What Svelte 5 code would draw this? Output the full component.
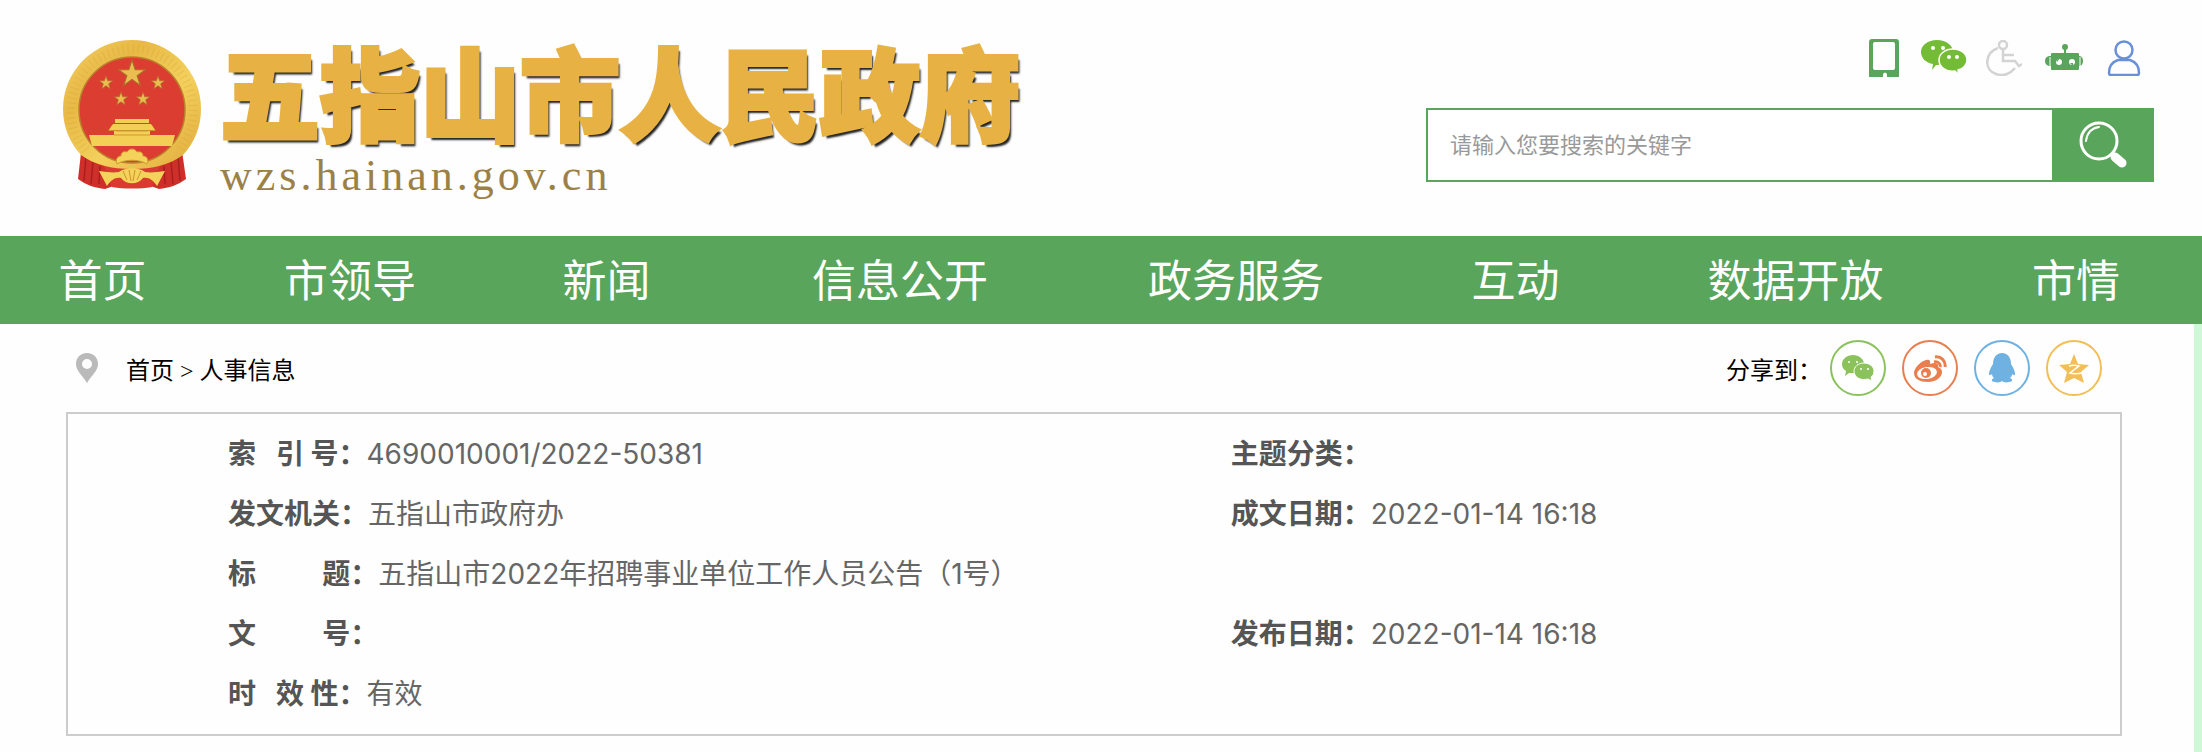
<script lang="ts">
	const navItems = ['首页', '市领导', '新闻', '信息公开', '政务服务', '互动', '数据开放', '市情'];

	// \u00a0 把短标签撑开，与四字标签对齐
	const wide = '\u00a0'.repeat(10);
	const rows = [
		[
			{ label: '索\u00a0\u00a0\u00a0引\u00a0号：', value: '4690010001/2022-50381' },
			{ label: '主题分类：', value: '' },
		],
		[
			{ label: '发文机关：', value: '五指山市政府办' },
			{ label: '成文日期：', value: '2022-01-14 16:18' },
		],
		[{ label: `标${wide}题：`, value: '五指山市2022年招聘事业单位工作人员公告（1号）' }],
		[
			{ label: `文${wide}号：`, value: '' },
			{ label: '发布日期：', value: '2022-01-14 16:18' },
		],
		[{ label: '时\u00a0\u00a0\u00a0效\u00a0性：', value: '有效' }],
	];

	let keyword = $state('');
</script>

{#snippet star(x: number, y: number, r: number)}
	<path
		transform="translate({x} {y}) scale({r})"
		d="M0-1 .23-.31H.95L.37.12.59.81 0 .38-.59.81-.37.12-.95-.31H-.23Z"
		fill="#e9bd4f"
		stroke="#a8702a"
		stroke-width=".08"
	/>
{/snippet}

<div class="page">
	<header class="header">
		<a class="brand" href="/" aria-label="五指山市人民政府">
			<svg class="emblem" viewBox="0 0 140 150" aria-hidden="true">
				<defs>
					<linearGradient id="gold" x1="0" y1="0" x2="1" y2="1">
						<stop offset="0" stop-color="#f1cd62" />
						<stop offset=".3" stop-color="#e8b945" />
						<stop offset=".6" stop-color="#f3d05c" />
						<stop offset="1" stop-color="#dfa93a" />
					</linearGradient>
				</defs>
				<!-- 绶带 -->
				<path fill="#cf2f29" d="M20 104 16 139c8 6 17 9 27 10l14-5h26l14 5c10-1 19-4 27-10l-5-35z" />
				<path fill="none" stroke="#a91f20" stroke-width="1.500" d="M24 116l-2 25M31 122l-2 22M38 126l-1 18M116 116l2 25M109 122l2 22M102 126l1 18" />
				<path fill="#db3a30" d="M42 126h56l-8 21c-12 2-28 2-40 0z" />
				<!-- 麦穗圆环 -->
				<path fill="url(#gold)" d="M19 115A69 69 0 0 1 1 69a69 69 0 0 1 138 0 69 69 0 0 1-18 46c-14 10-30 14-51 14s-37-4-51-14z" />
				<path fill="none" stroke="#cf9b36" stroke-width="9" stroke-dasharray="1 4" opacity=".3" d="M24 110A61 61 0 1 1 116 110" />
				<circle cx="70" cy="70" r="53" fill="#db3d31" stroke="#b9812c" stroke-width="1.500" />
				{@render star(70, 34, 14)}
				{@render star(44, 43, 7)}
				{@render star(96, 43, 7)}
				{@render star(59, 59, 7)}
				{@render star(81, 59, 7)}
				<!-- 天安门 -->
				<path fill="#c98e31" d="M50 85h40l4 6H46z" />
				<path fill="#f4cf55" d="M53 79h34v4H53zM51 84h38l4 6H47zM52 91h36v5H52zM27 95h86l-3 11H30z" />
				<path stroke="#cf9636" stroke-width="1" d="M54 91h32M52 95h36" />
				<!-- 齿轮与结 -->
				<path fill="#f5d25a" stroke="#d19a37" d="M55 124c-2-5 1-8 4-8 0-4 3-5 6-4 2-4 8-4 10 0 4-1 6 1 6 4 4 0 6 4 4 8-8-5-22-5-30 0z" />
				<path fill="#f5d25a" d="M37 131c8 1 14 2 20 1 6-5 20-5 26 0 6 1 12 0 20-1l-8 15c-4-6-8-9-14-8-5 7-17 7-22 0-6-1-10 2-14 8z" />
				<path fill="none" stroke="#ce9331" d="M61 131l4 9M67 130l2 11M73 130l-2 11M79 131l-4 9" />
			</svg>
			<span class="brand-text">
				<span class="site-name">五指山市人民政府</span>
				<span class="site-url">wzs.hainan.gov.cn</span>
			</span>
		</a>

		<div class="tools">
			<div class="quick-links">
				<a href="#mobile" aria-label="手机版">
					<svg width="30" height="38" viewBox="0 0 30 38">
						<path fill="#5aa55c" fill-rule="evenodd" d="M3 0h24q3 0 3 3v35H18v-3q-2-3-4 0v3H0V3q0-3 3-3zM6 3q-2 0-2 2v24q0 2 2 2h18q2 0 2-2V5q0-2-2-2z" />
					</svg>
				</a>
				<a href="#wechat" aria-label="微信">
					<svg width="46" height="36" viewBox="0 0 46 36">
						<path fill="#74bb36" d="M16 0c9 0 16 5 16 12S25 25 16 25h-1l-4 5 1-6C5 23 0 18 0 12 0 5 7 0 16 0z" />
						<path fill="#74bb36" stroke="#fff" stroke-width="1.500" d="M32 9c8 0 14 5 14 11 0 5-4 9-9 10l1 5-4-4c-9 1-16-4-16-11 0-6 6-11 14-11z" />
						<g fill="#fff"><circle cx="12" cy="8" r="2" /><circle cx="22" cy="8" r="2" /><circle cx="28" cy="17" r="2" /><circle cx="36" cy="17" r="2" /></g>
					</svg>
				</a>
				<a href="#accessible" aria-label="无障碍">
					<svg width="36" height="36" viewBox="0 0 36 36" fill="none" stroke="#d3d3d3" stroke-width="2.500">
						<circle cx="17" cy="5" r="4" />
						<path d="M17 9v12h12l4 5 3-2M17 15h11M12 8C-2 13-2 30 10 34c8 3 15-1 19-6" />
					</svg>
				</a>
				<a href="#robot" aria-label="智能问答">
					<svg width="38" height="36" viewBox="0 0 38 36" fill="#5aa55c">
						<circle cx="20" cy="7" r="3" />
						<path d="M19 8h2v6h-2zM7 13h26q1 0 1 1v2h1q3 1 3 5t-3 5h-1v3q0 1-1 1H7q-1 0-1-1v-3H4Q0 25 0 21t4-5h2v-2q0-1 1-1z" />
						<g fill="#fff"><circle cx="14" cy="22" r="3" /><circle cx="27" cy="22" r="3" /></g>
						<path d="M11 20l4-2-3 4zM25 23l3 3v-3z" />
						<path stroke="#fff" d="M5 17v9M35 17v9" />
					</svg>
				</a>
				<a href="#user" aria-label="用户中心">
					<svg width="34" height="36" viewBox="0 0 34 36" fill="none" stroke="#6a90d8" stroke-width="2.500">
						<circle cx="17" cy="10" r="8.500" />
						<path d="M11 20h12c6 2 9 7 9 13q0 2-2 2H4q-2 0-2-2c0-6 3-11 9-13z" />
					</svg>
				</a>
			</div>
			<form class="search" onsubmit={(e) => e.preventDefault()}>
				<input type="text" bind:value={keyword} aria-label="搜索" placeholder="请输入您要搜索的关键字" />
				<button type="submit" aria-label="搜索">
					<svg width="50" height="48" viewBox="0 0 50 48" fill="none" stroke="#fff">
						<circle cx="21" cy="20" r="18" stroke-width="3" />
						<path stroke-width="2" stroke-linecap="round" d="M8 20C9 12 14 7 21 6" />
						<path stroke-width="9" stroke-linecap="round" d="M37 36l7 6" />
						<path stroke-width="4" d="M33 32l4 4" />
					</svg>
				</button>
			</form>
		</div>
	</header>

	<nav class="nav">
		{#each navItems as item}
			<a href="#{item}">{item}</a>
		{/each}
	</nav>

	<main class="content">
		<div class="location">
			<svg class="pin" width="22" height="30" viewBox="0 0 22 30" aria-hidden="true">
				<path fill="#bababa" fill-rule="evenodd" d="M11 0c7 0 11 5 11 11 0 7-7 12-11 19C7 23 0 18 0 11 0 5 4 0 11 0zm0 6a5 5 0 1 0 0 10 5 5 0 0 0 0-10z" />
			</svg>
			<div class="crumbs"><a href="#home">首页</a> &gt; <a href="#personnel">人事信息</a></div>
			<div class="share">
				<span>分享到：</span>
				<button class="wechat" aria-label="分享到微信">
					<svg width="32" height="26" viewBox="0 0 32 26">
						<path fill="currentColor" d="M11 0c6 0 11 4 11 9s-5 9-11 9l-4 0-4 3 1-5C1 14 0 12 0 9c0-5 5-9 11-9z" />
						<path fill="currentColor" stroke="#fff" d="M22 8c6 0 10 4 10 8 0 3-1 5-3 6l1 4-4-2c-8 2-14-2-14-8 0-4 4-8 10-8z" />
						<g fill="#fff"><circle cx="7" cy="7" r="1" /><circle cx="15" cy="7" r="1" /><circle cx="19" cy="14" r="1" /><circle cx="26" cy="14" r="1" /></g>
					</svg>
				</button>
				<button class="weibo" aria-label="分享到微博">
					<svg width="33" height="27" viewBox="0 0 33 27">
						<path fill="currentColor" d="M12 5c3-1 5 0 4 4 5-2 9-1 8 3 3 1 4 3 4 5 0 6-7 10-14 10C6 27 0 24 0 18 0 13 7 6 12 5z" />
						<ellipse cx="13" cy="18" rx="10" ry="6" fill="#fff" transform="rotate(-8 13 18)" />
						<circle cx="12" cy="18" r="5" fill="currentColor" />
						<circle cx="11" cy="19" r="2" fill="#fff" />
						<path fill="none" stroke="currentColor" stroke-width="3" d="M21 2c6-1 11 4 10 10M20 7c4-1 7 2 6 5" />
					</svg>
				</button>
				<button class="qq" aria-label="分享到QQ">
					<svg width="26" height="30" viewBox="0 0 26 30">
						<path fill="currentColor" d="M13 0c6 0 9 5 9 11 2 3 4 7 4 10 0 2-2 1-3 0 0 2-1 3-2 4 3 1 3 4-1 4-3 1-6 0-7-1-1 1-4 2-7 1-4 0-4-3-1-4-1-1-2-2-2-4-1 1-3 2-3 0 0-3 2-7 4-10C4 5 7 0 13 0z" />
					</svg>
				</button>
				<button class="qzone" aria-label="分享到QQ空间">
					<svg width="30" height="29" viewBox="0 0 30 29">
						<path fill="currentColor" d="M15 0l4 10 11 1-8 7 3 11-10-5-10 5 3-11-8-7 11-1z" />
						<path fill="none" stroke="#fff" stroke-width="1.500" d="M10 12c3-1 7-1 10 0l-9 7c4 1 7 1 12 0" />
					</svg>
				</button>
			</div>
		</div>

		<div class="info">
			<table>
				<tbody>
					{#each rows as row}
						<tr>
							{#each row as cell}
								<td colspan={row.length === 1 ? 2 : 1}>
									<strong>{cell.label}</strong><span>{cell.value}</span>
								</td>
							{/each}
						</tr>
					{/each}
				</tbody>
			</table>
		</div>
	</main>
</div>

<style>
	:global(body) {
		background: #fefefe;
	}
	.page {
		font-family: 'Liberation Sans', 'Noto Sans CJK SC', sans-serif;
	}
	a {
		color: inherit;
		text-decoration: none;
	}
	svg {
		display: block;
	}

	.header {
		display: flex;
		justify-content: space-between;
		align-items: flex-start;
		box-sizing: border-box;
		min-height: 236px;
		padding: 36px 48px 36px 62px;
	}
	.brand {
		display: flex;
		gap: 18px;
	}
	.emblem {
		width: 140px;
		height: 150px;
		margin-top: 4px;
	}
	.brand-text {
		display: flex;
		flex-direction: column;
	}
	.site-name {
		font-size: 100px;
		font-weight: 900;
		line-height: 124px;
		white-space: nowrap;
		color: #e8b143;
		-webkit-text-stroke: 4px #e8b143;
		text-shadow: 3px 4px 2px #222;
	}
	.site-url {
		font-family: 'Liberation Serif', serif;
		font-size: 44px;
		line-height: 32px;
		letter-spacing: 4px;
		color: #9b8146;
	}

	.tools {
		width: 728px;
	}
	.quick-links {
		display: flex;
		justify-content: flex-end;
		align-items: center;
		height: 44px;
	}
	.quick-links a {
		display: flex;
		justify-content: center;
		width: 60px;
	}
	.search {
		display: flex;
		height: 74px;
		margin-top: 28px;
	}
	.search input {
		flex: 1;
		min-width: 0;
		box-sizing: border-box;
		padding: 2px 22px 0;
		border: 2px solid #59a55b;
		border-right: none;
		border-radius: 0;
		outline: none;
		background: #fff;
		font: inherit;
		font-size: 22px;
	}
	.search input::placeholder {
		color: #999;
	}
	.search button {
		display: flex;
		align-items: center;
		justify-content: center;
		width: 102px;
		padding: 0;
		border: none;
		background: #59a55b;
		cursor: pointer;
	}

	.nav {
		display: grid;
		grid-template-columns: 205fr 290fr 223fr 364fr 308fr 251fr 309fr 252fr;
		padding-top: 4px;
		background: #59a55b;
		color: #fff;
		font-size: 44px;
		line-height: 84px;
		text-align: center;
		white-space: nowrap;
	}

	.content {
		padding: 16px 72px 16px 66px;
		border-right: 8px solid #cff8d6;
	}
	.location {
		display: flex;
		align-items: center;
		padding: 0 20px 0 10px;
		color: #000;
		font-family: 'Liberation Serif', 'Noto Sans CJK SC', serif;
		font-size: 24px;
	}
	.crumbs {
		margin-left: 28px;
	}
	.share {
		display: flex;
		align-items: center;
		gap: 16px;
		margin-left: auto;
	}
	.share span {
		margin-right: -8px;
	}
	.share button {
		display: flex;
		align-items: center;
		justify-content: center;
		box-sizing: border-box;
		width: 56px;
		height: 56px;
		padding: 0;
		border: 2px solid currentColor;
		border-radius: 50%;
		background: #fff;
		cursor: pointer;
	}
	.share .wechat {
		color: #8bc25c;
	}
	.share .weibo {
		color: #e97e4e;
	}
	.share .qq {
		color: #6fb2e2;
	}
	.share .qzone {
		color: #f2bf56;
	}

	.info {
		margin-top: 16px;
		padding: 10px 0 10px 160px;
		border: 2px solid #ccc;
	}
	.info table {
		width: 100%;
		table-layout: fixed;
		border-collapse: collapse;
		font-family: Inter, 'Noto Sans CJK SC', sans-serif;
		font-size: 28px;
		line-height: 60px;
		color: #666;
	}
	.info td {
		padding: 0;
		white-space: nowrap;
	}
	.info td:first-child {
		width: 53%;
	}
	.info strong {
		color: #555;
	}
</style>
